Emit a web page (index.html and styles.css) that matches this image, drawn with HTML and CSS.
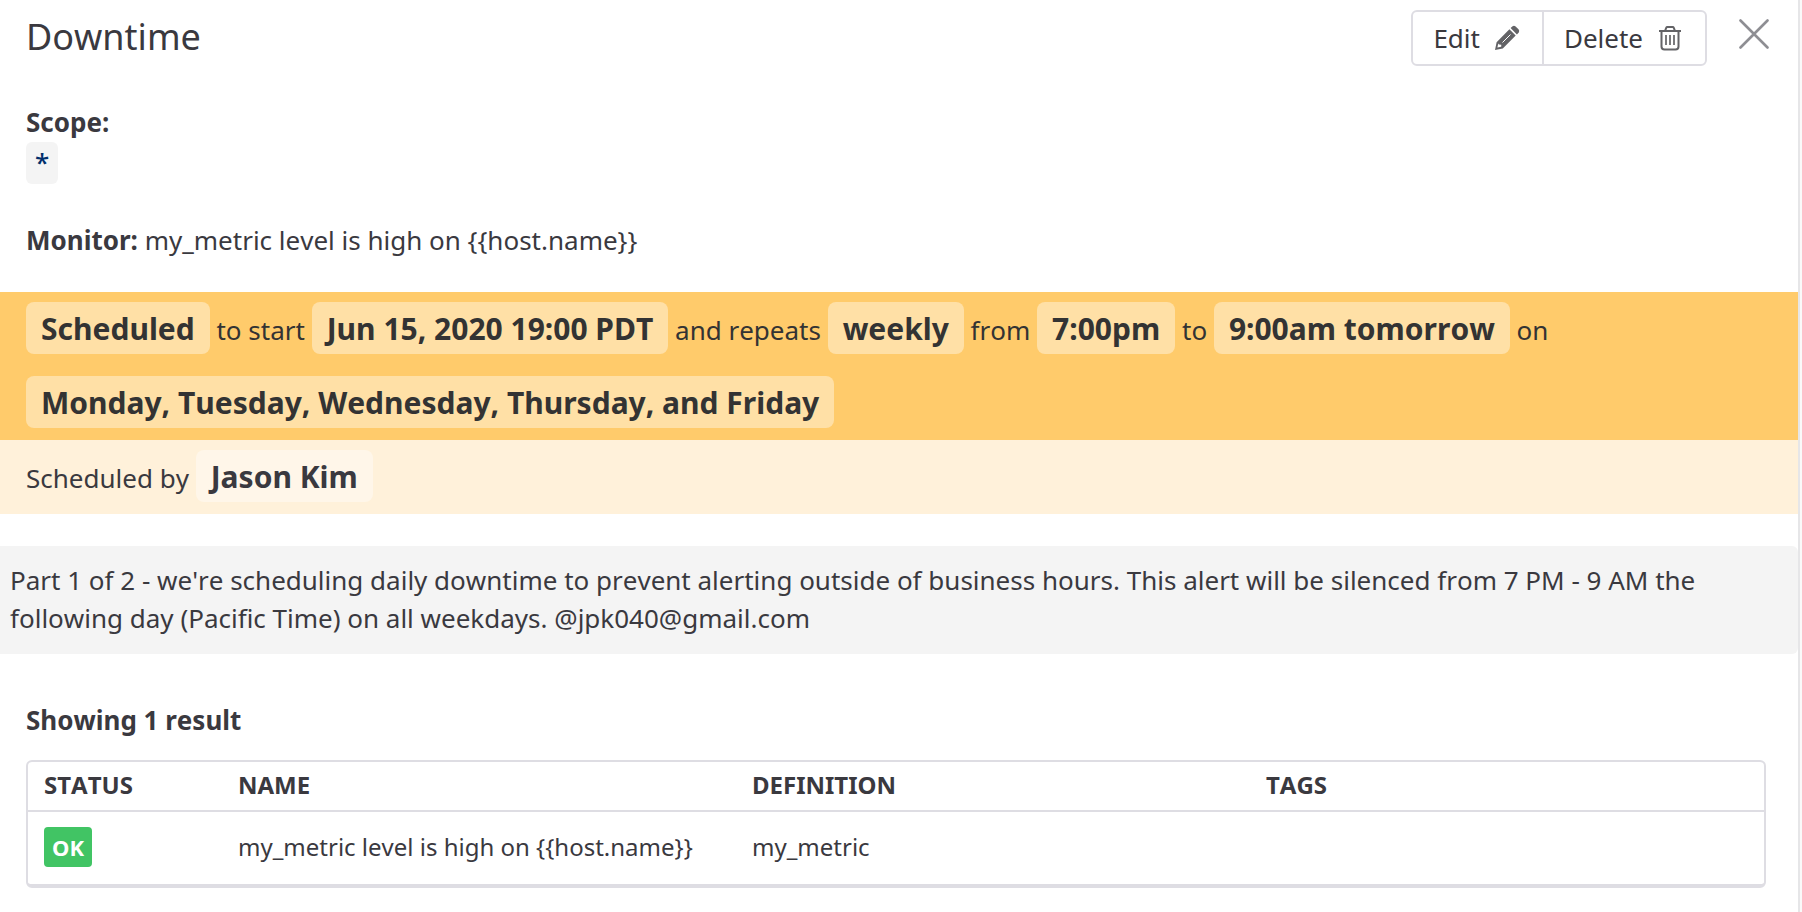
FILE: index.html
```html
<!DOCTYPE html>
<html lang="en">
<head>
<meta charset="utf-8">
<title>Downtime</title>
<link rel="stylesheet" href="styles.css">
</head>
<body>
<main class="panel">
  <header class="header">
    <h1 class="title">Downtime</h1>
    <div class="actions">
      <div class="button-group">
        <button class="button" type="button">Edit
          <svg class="icon" viewBox="0 0 26 26" aria-hidden="true">
            <path fill="#636366" fill-rule="evenodd" d="M1 25 2.600 17.200 15.400 4.300 21.700 10.600 8.800 23.400ZM3.400 22.600 7.200 21.800 7.300 19.700 5 19.400 4.300 18.500ZM16.600 3.100 18.600 1.200Q20 .200 21.600 1.400L24.500 4.300Q25.800 5.900 24.800 7.400L22.900 9.400Z"/>
            <path stroke="#fff" stroke-width="1" d="M8.500 17.500 16.500 9.500"/>
          </svg>
        </button>
        <button class="button" type="button">Delete
          <svg class="icon" viewBox="0 0 26 26" fill="none" stroke="#636366" stroke-width="2" aria-hidden="true">
            <path d="M2 6H24M8 6 9.200 2.800Q9.500 2 10.400 2H15.600Q16.500 2 16.800 2.800L18 6M4.500 6V21.500Q4.500 24.500 7.500 24.500H18.500Q21.500 24.500 21.500 21.500V6"/>
            <path stroke-width="1.700" d="M9 10V20M13 10V20M17 10V20"/>
          </svg>
        </button>
      </div>
      <button class="close" type="button" aria-label="Close">
        <svg class="close-icon" viewBox="0 0 30 30" fill="none" stroke="#8e8e93" stroke-width="2.600" stroke-linecap="round" aria-hidden="true"><path d="M1.500 1.500 28.500 28.500M28.500 1.500 1.500 28.500"/></svg>
      </button>
    </div>
  </header>

  <section class="scope">
    <strong>Scope:</strong>
    <span class="tag">*</span>
  </section>

  <p class="monitor"><strong>Monitor:</strong> my_metric level is high on {{host.name}}</p>

  <p class="schedule"><b class="chip">Scheduled</b> to start <b class="chip">Jun 15, 2020 19:00 PDT</b> and repeats <b class="chip">weekly</b> from <b class="chip">7:00pm</b> to <b class="chip">9:00am tomorrow</b> on <b class="chip">Monday, Tuesday, Wednesday, Thursday, and Friday</b></p>
  <p class="author">Scheduled by <b class="chip">Jason Kim</b></p>

  <p class="message">Part 1 of 2 - we're scheduling daily downtime to prevent alerting outside of business hours. This alert will be silenced from 7 PM - 9 AM the following day (Pacific Time) on all weekdays. @jpk040@gmail.com</p>

  <section class="results">
    <h2 class="results-title">Showing 1 result</h2>
    <div class="table-frame">
      <table class="table">
        <thead>
          <tr><th class="status-column" scope="col">STATUS</th><th scope="col">NAME</th><th scope="col">DEFINITION</th><th scope="col">TAGS</th></tr>
        </thead>
        <tbody>
          <tr><td><span class="badge">OK</span></td><td>my_metric level is high on {{host.name}}</td><td>my_metric</td><td></td></tr>
        </tbody>
      </table>
    </div>
  </section>
</main>
</body>
</html>
```
FILE: styles.css
```css
* {
  box-sizing: border-box;
}

body {
  margin: 0;
  padding-right: 2px;
  background: #fafafa;
  color: #3a393f;
  font: 26px/38px "Noto Sans", "Open Sans", sans-serif;
  font-kerning: none;
}

h1, h2, p {
  margin: 0;
}

.panel {
  min-height: 100vh;
  border-right: 2px solid #e6e6e8;
  background: #fff;
}

.header {
  display: flex;
  justify-content: space-between;
  align-items: flex-start;
  padding: 10px 27px 0 26px;
}

.title {
  font-size: 36px;
  line-height: 54px;
  font-weight: 400;
}

.actions {
  display: flex;
  gap: 30px;
}

.button-group {
  display: flex;
  border: 2px solid #dedde3;
  border-radius: 6px;
}

.button {
  display: flex;
  align-items: center;
  gap: 14px;
  height: 52px;
  padding: 0 22px 0 20px;
  border: 0;
  background: none;
  color: inherit;
  font: inherit;
}

.button + .button {
  border-left: 2px solid #dedde3;
}

.icon {
  width: 26px;
  height: 26px;
}

.close {
  display: flex;
  align-self: flex-start;
  padding: 9px 2px;
  border: 0;
  background: none;
}

.close-icon {
  width: 30px;
  height: 30px;
}

.scope {
  display: flex;
  flex-direction: column;
  align-items: flex-start;
  gap: 1px;
  padding: 37px 26px 0;
}

.tag {
  padding: 1px 9px 3px;
  border-radius: 6px;
  background: #f4f4f4;
  color: #002f6c;
  font-weight: 500;
}

.monitor {
  padding: 37px 26px 33px;
}

.schedule,
.author {
  padding: 0 26px;
}

.schedule {
  background: #ffcb6b;
  color: #333;
}

.author {
  background: #fff1da;
}

.chip {
  display: inline-block;
  margin: 10px 0 12px;
  padding: 1px 15px 0;
  border-radius: 8px;
  background: rgba(255, 255, 255, 0.4);
  font-size: 30px;
  line-height: 51px;
}

.message {
  margin-top: 32px;
  padding: 15px 10px 17px;
  border-radius: 0 6px 6px 0;
  background: #f4f4f4;
}

.results {
  padding: 47px 32px 24px 26px;
}

.results-title {
  margin-bottom: 21px;
  font-size: 26px;
}

.table-frame {
  border: 2px solid #dedde3;
  border-bottom-width: 4px;
  border-radius: 6px;
}

.table {
  width: 100%;
  border-collapse: collapse;
  table-layout: fixed;
  font-size: 24px;
  line-height: 36px;
}

.table th,
.table td {
  padding: 0 16px 2px;
  text-align: left;
}

.table th {
  height: 49px;
  border-bottom: 2px solid #dedde3;
}

.table td {
  height: 73px;
}

.table .status-column {
  width: 194px;
}

.badge {
  display: inline-block;
  padding: 0 8px;
  border-radius: 4px;
  background: #41c464;
  color: #fff;
  font-size: 22px;
  font-weight: 700;
  line-height: 40px;
}
```
